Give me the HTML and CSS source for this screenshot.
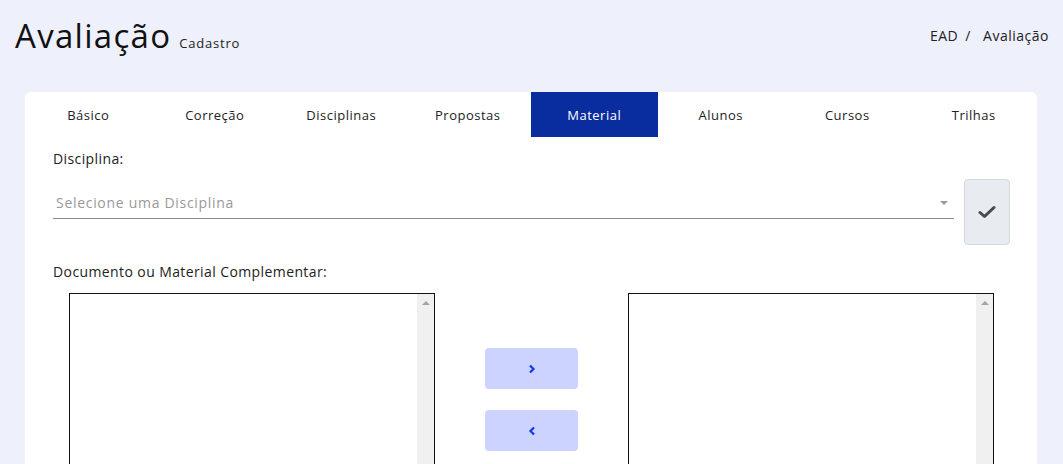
FILE: index.html
```html
<!DOCTYPE html>
<html lang="pt-BR">
<head>
    <meta charset="UTF-8">
    <meta name="viewport" content="width=device-width, initial-scale=1.0">
    <title>Avaliação - Cadastro</title>
    <link rel="stylesheet" href="styles.css">
</head>
<body>

    <div class="page-header">
        <h1 class="page-title">Avaliação <small>Cadastro</small></h1>
        <div class="breadcrumb">
            <span>EAD</span>
            <span class="sep">/</span>
            <span>Avaliação</span>
        </div>
    </div>

    <div class="card">
        <div class="tabs">
            <div class="tab">Básico</div>
            <div class="tab">Correção</div>
            <div class="tab">Disciplinas</div>
            <div class="tab">Propostas</div>
            <div class="tab active">Material</div>
            <div class="tab">Alunos</div>
            <div class="tab">Cursos</div>
            <div class="tab">Trilhas</div>
        </div>

        <div class="panel">
            <label class="field-label">Disciplina:</label>
            <div class="select-row">
                <div class="select">
                    <span class="placeholder">Selecione uma Disciplina</span>
                    <span class="caret"></span>
                </div>
                <button class="check-btn" type="button">
                    <svg width="18" height="14" viewBox="0 0 18 14">
                        <path d="M2 7.5 L6.5 11.5 L16 2.5" fill="none" stroke="#454a52" stroke-width="3" stroke-linecap="round" stroke-linejoin="round"/>
                    </svg>
                </button>
            </div>

            <label class="field-label doc-label">Documento ou Material Complementar:</label>
            <div class="dual-list">
                <div class="listbox">
                    <div class="scrollbar"><span class="arrow-up"></span></div>
                </div>
                <div class="transfer">
                    <button class="move-btn" type="button">
                        <svg width="8" height="10" viewBox="0 0 8 10">
                            <path d="M2 1.5 L5.5 5 L2 8.5" fill="none" stroke="#1236f2" stroke-width="2.2"/>
                        </svg>
                    </button>
                    <button class="move-btn" type="button">
                        <svg width="8" height="10" viewBox="0 0 8 10">
                            <path d="M6 1.5 L2.5 5 L6 8.5" fill="none" stroke="#1236f2" stroke-width="2.2"/>
                        </svg>
                    </button>
                </div>
                <div class="listbox">
                    <div class="scrollbar"><span class="arrow-up"></span></div>
                </div>
            </div>
        </div>
    </div>

</body>
</html>
```

FILE: styles.css
```css
body {
    font-family: "Open Sans", Arial, sans-serif;
    background-color: #eef0fb;
    color: #222;
    margin: 0;
    padding: 0;
    overflow: hidden;
}

.page-header {
    display: flex;
    justify-content: space-between;
    align-items: flex-start;
    height: 92px;
    padding: 0 14px 0 15px;
}

.page-title {
    margin: 13px 0 0 0;
    font-size: 33px;
    font-weight: 400;
    color: #111;
    letter-spacing: 1.3px;
}

.page-title small {
    font-size: 13px;
    color: #222;
    letter-spacing: 0.8px;
    margin-left: -2px;
}

.breadcrumb {
    margin-top: 26px;
    font-size: 14px;
    color: #222;
    letter-spacing: 0.5px;
}

.breadcrumb .sep {
    margin: 0 8px 0 3px;
}

.card {
    margin: 0 26px 0 25px;
    background-color: #fff;
    border-radius: 6px 6px 0 0;
}

.tabs {
    display: grid;
    grid-template-columns: repeat(8, 1fr);
    height: 45px;
}

.tab {
    display: flex;
    align-items: center;
    justify-content: center;
    font-size: 13px;
    color: #222;
    letter-spacing: 0.5px;
}

.tab.active {
    background-color: #092c9e;
    color: #fff;
}

.panel {
    padding: 12px 27px 0 28px;
    height: 400px;
}

.field-label {
    display: block;
    font-size: 14px;
    letter-spacing: 0.4px;
    color: #222;
}

.select-row {
    display: flex;
    gap: 10px;
    margin-top: 11px;
}

.select {
    flex: 1;
    height: 40px;
    box-sizing: border-box;
    display: flex;
    align-items: center;
    justify-content: space-between;
    border-bottom: 1px solid #8a8a8a;
    padding: 8px 6px 0 3px;
}

.placeholder {
    font-size: 14px;
    letter-spacing: 0.7px;
    color: #999;
}

.caret {
    width: 0;
    height: 0;
    border-left: 4px solid transparent;
    border-right: 4px solid transparent;
    border-top: 4px solid #999;
}

.check-btn {
    width: 46px;
    height: 66px;
    background-color: #e8ebef;
    border: 1px solid #d5d8dc;
    border-radius: 4px;
    display: flex;
    align-items: center;
    justify-content: center;
    padding: 0;
}

.doc-label {
    margin-top: 17px;
}

.dual-list {
    display: flex;
    margin: 12px 16px 0 16px;
}

.listbox {
    width: 366px;
    height: 300px;
    border: 1px solid #111;
    box-sizing: border-box;
    display: flex;
    justify-content: flex-end;
}

.scrollbar {
    width: 17px;
    background-color: #f0f0f0;
    display: flex;
    justify-content: center;
}

.arrow-up {
    margin-top: 7px;
    width: 0;
    height: 0;
    border-left: 4px solid transparent;
    border-right: 4px solid transparent;
    border-bottom: 4px solid #a3a3a3;
}

.transfer {
    flex: 1;
    display: flex;
    flex-direction: column;
    align-items: center;
    gap: 21px;
    padding-top: 55px;
}

.move-btn {
    width: 93px;
    height: 41px;
    background-color: #ccd3ff;
    border: none;
    border-radius: 4px;
    display: flex;
    align-items: center;
    justify-content: center;
    padding: 0;
}
```
